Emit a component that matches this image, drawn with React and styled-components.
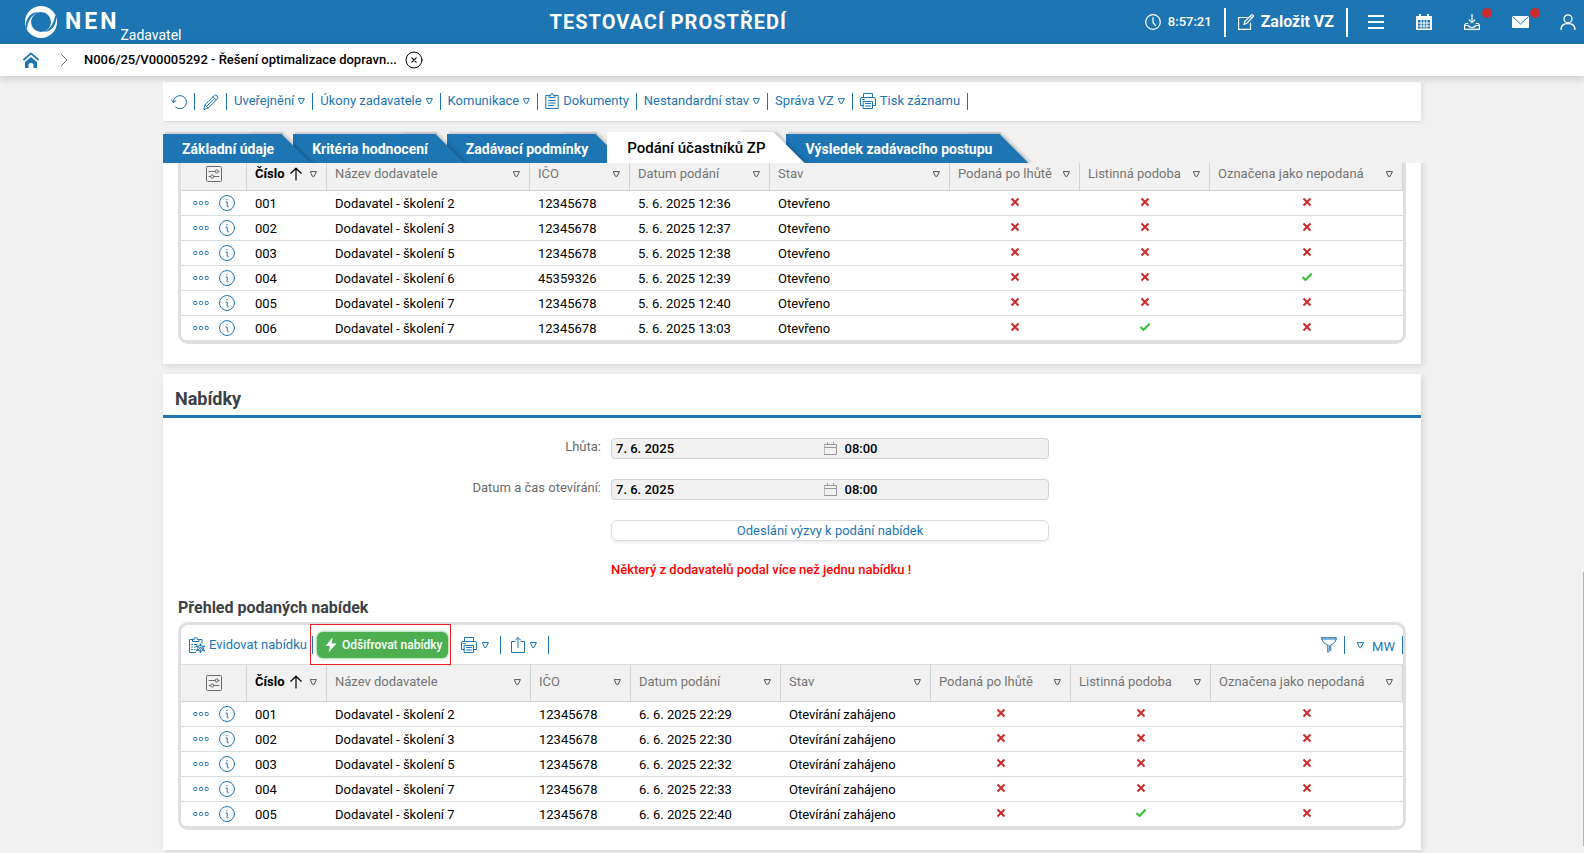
import React from 'react';
import styled, { createGlobalStyle, css } from 'styled-components';

const BLUE = '#1d75b4';
const LINE = '#dcdddf';
const GREY = '#f1f1f1';

const GlobalStyle = createGlobalStyle`
  *, *::before, *::after { box-sizing: border-box; }
  body {
    margin: 0;
    background: ${GREY};
    color: #000;
    font: 400 13px/16px Roboto, "Liberation Sans", sans-serif;
  }
  button, input { font: inherit; color: inherit; }
  svg { display: block; flex: none; }
`;

const Page = styled.div`
  position: relative;
  display: flex;
  flex-direction: column;
  min-height: 100vh;
`;

const plainButton = css`
  display: inline-flex;
  align-items: center;
  padding: 0;
  border: 0;
  background: none;
  cursor: pointer;
  white-space: nowrap;
`;

/* ---------- icons ---------- */

const Svg = ({ w = 16, h = w, box = `0 0 ${w} ${h}`, sw = 1, children, ...rest }) => (
  <svg width={w} height={h} viewBox={box} fill="none" stroke="currentColor" strokeWidth={sw}
    strokeLinecap="round" strokeLinejoin="round" aria-hidden="true" {...rest}>
    {children}
  </svg>
);

const Logo = () => (
  <Svg w={32} stroke="none">
    <circle cx="16" cy="16" r="16" fill="#fff" />
    <circle cx="16" cy="16" r="10" fill={BLUE} />
    <path d="M.6 22C.6 13 5 5.500 14 6.200C8 7.500 3.500 13 2 22z" fill={BLUE} />
    <path d="M31.400 10C31.400 19 27 26.500 18 25.800C24 24.500 28.500 19 30 10z" fill={BLUE} />
  </Svg>
);
const HomeIcon = () => (
  <Svg w={16} stroke="none">
    <path d="M8 5L14 10V16H10.500V12.500Q10.500 11 8 11T5.500 12.500V16H2V10z" fill={BLUE} />
    <path d="M1 7.500L8 1.300L15 7.500" stroke={BLUE} strokeWidth="1.800" fill="none" />
  </Svg>
);
const ChevronIcon = () => <Svg w={8} h={14} stroke="#666"><path d="M1.500 1.500L7 7L1.500 12.500" /></Svg>;
const CloseIcon = () => (
  <Svg w={18}><circle cx="9" cy="9" r="8" /><path d="M6.800 6.800L11.200 11.200M11.200 6.800L6.800 11.200" strokeWidth="1.200" /></Svg>
);
const ClockIcon = () => (
  <Svg w={16} sw={1.2}><circle cx="8" cy="8" r="7.300" /><path d="M8 3.500V8.500L10.500 11.500" /></Svg>
);
const EditIcon = () => (
  <Svg w={16} sw={1.2}>
    <path d="M9 3.500H.6V15.400H12.500V9" />
    <path d="M6 10.500L6.800 7.500L13.500.9Q14.200.4 15 1.100T15.200 2.500L8.800 9.300z" />
    <path d="M12.200 2.200L13.800 3.800" />
  </Svg>
);
const MenuIcon = () => <Svg w={16} sw={2} strokeLinecap="butt"><path d="M0 2H16M0 8H16M0 14H16" /></Svg>;
const CalendarIcon = () => (
  <Svg w={16} stroke="none">
    <path d="M0 2H3V0H5V2H11V0H13V2H16V16H0zM2 6V14.500H14V6z" fill="currentColor" fillRule="evenodd" />
    <path d="M5 6.500V14M8 6.500V14M11 6.500V14M2.500 9H13.500M2.500 12H13.500" stroke="currentColor" strokeWidth="1" />
  </Svg>
);
const DownloadIcon = () => (
  <Svg w={16} sw={1.2}>
    <path d="M8 .5V8.500M5.300 6L8 8.700L10.700 6" />
    <path d="M4 9.500H1.800L.6 11V15.400H15.400V11L14.200 9.500H12M.6 11.500H4.500Q5 13.500 8 13.500T11.500 11.500H15.400" />
  </Svg>
);
const MailIcon = () => (
  <Svg w={17} h={12}>
    <rect x="0" y="0" width="17" height="12" rx="1" fill="currentColor" stroke="none" />
    <path d="M.8.800L8.500 8L16.200.8" stroke={BLUE} />
  </Svg>
);
const UserIcon = () => (
  <Svg w={16} sw={1.3}><circle cx="8" cy="4.800" r="4" /><path d="M1 16C1 11.500 4 9.500 8 9.500S15 11.500 15 16" /></Svg>
);
const RefreshIcon = () => (
  <Svg w={16}><path d="M2.300 8.500A6.600 6.600 0 1 1 4.700 13.300" /><path d="M.5 6L2.300 8.500L5 6.500" /></Svg>
);
const PencilIcon = () => (
  <Svg w={16}>
    <path d="M.7 15.300L2 10.800L11.300 1.500Q12.500.3 14.100 1.900T14.500 4.700L5.200 14z" />
    <path d="M10 2.800L13.200 6M4 12L11.300 4.500M2 10.800L5.200 14" />
  </Svg>
);
const ClipboardIcon = () => (
  <Svg w={14} h={16}>
    <path d="M4 2.500H.8V15.500H13.200V2.500H10M4 2.500V4.500H10V2.500H8.500Q8.500.5 7 .5T5.500 2.500z" />
    <path d="M3.500 7.500H10.500M3.500 10H10.500M3.500 12.500H8.500" />
  </Svg>
);
const PrintIcon = () => (
  <Svg w={16}>
    <path d="M3.500 4.500V.5H12.500V4.500M3.500 12.500H.5V6Q.5 4.500 2 4.500H14Q15.500 4.500 15.500 6V12.500H12.500" />
    <path d="M3.500 8.500H12.500V15.500H3.500zM5.500 10.500H10.500M5.500 13H10.500M2.500 6.500H4.500" />
  </Svg>
);
const RegisterIcon = () => (
  <Svg w={16}>
    <path d="M6.500 15.500H.5V2.500H3.500M10 2.500H13V6M3.500 2.500V4.500H10V2.500H8.500Q8.500.5 6.700.5T5 2.500z" />
    <path d="M2.500 7.500H3.500M5.500 7.500H8M2.500 10H3.500M5.500 10H6.500M2.500 12.500H3.500M5.500 12.500H6" />
    <path d="M11.500 7V8.500M11.500 14V15.500M7.800 9.100L9 9.900M14 12.600L15.300 13.400M7.800 13.400L9 12.600M14 9.900L15.300 9.100" strokeWidth="1.500" />
    <circle cx="11.500" cy="11.300" r="2.900" /><circle cx="11.500" cy="11.300" r="1" />
  </Svg>
);
const BoltIcon = () => (
  <Svg w={12} h={16} stroke="none"><path d="M7.500.5L.5 9H5L3.500 15.500L11.500 6.500H6.800z" fill="#fff" /></Svg>
);
const ShareIcon = () => (
  <Svg w={14} h={16}><path d="M4 4.500H.5V15.500H13.500V4.500H10M7 10.500V1M4.500 3L7 .5L9.500 3" /></Svg>
);
const FilterIcon = () => (
  <Svg w={16}><path d="M.7 .7H15.300Q15.300 5.500 9.800 8V13L6.800 15.300V8Q.7 5.500 .7 .7zM.9 2H15.100M8.300 8.500V13" /></Svg>
);
const TriIcon = () => <Svg w={7} h={6}><path d="M.6.600H6.400L4.200 5.300H2.800z" /></Svg>;
const ColumnsIcon = () => (
  <Svg w={16} stroke="#6a6a6a">
    <rect x=".5" y=".5" width="15" height="15" rx="1" />
    <path d="M3 5.500H9M13 5.500H12.500M3 10.500H4.500M8.500 10.500H13" />
    <circle cx="10.800" cy="5.500" r="1.600" /><circle cx="6.300" cy="10.500" r="1.600" />
  </Svg>
);
const ArrowUpIcon = () => <Svg w={12} h={14} sw={1.2}><path d="M6 13V1.200M.8 6.200L6 1.200L11.200 6.200" /></Svg>;
const MoreIcon = () => (
  <Svg w={16} h={6}>
    <rect x=".8" y="1.500" width="3" height="3" rx=".8" /><rect x="6.500" y="1.500" width="3" height="3" rx=".8" />
    <rect x="12.200" y="1.500" width="3" height="3" rx=".8" />
  </Svg>
);
const InfoIcon = () => (
  <Svg w={16}>
    <circle cx="8" cy="8" r="7.500" />
    <path d="M7 7H8.200V11.500Q8.200 12 9.300 11.800M8 4.300V4.800" />
  </Svg>
);
const DateIcon = () => (
  <Svg w={13} stroke="#999"><path d="M.5 2.500H12.500V12.500H.5zM.5 5.500H12.500M3.500.5V2.500M9.500.5V2.500" /></Svg>
);
const CrossMark = () => (
  <Svg w={10} sw={2} stroke="#cf2a2a" strokeLinecap="butt"><path d="M1.500 1.500L8.500 8.500M8.500 1.500L1.500 8.500" /></Svg>
);
const CheckMark = () => (
  <Svg w={10} sw={2} stroke="#35c135" strokeLinecap="butt"><path d="M.5 5L3.500 8L9.700 1.500" /></Svg>
);

/* ---------- header ---------- */

const TopBar = styled.header`
  display: flex;
  align-items: center;
  height: 44px;
  padding: 0 8px 0 25px;
  background: ${BLUE};
  color: #fff;
`;
const Side = styled.div`
  flex: 1 1 0;
  display: flex;
  align-items: center;
  align-self: stretch;
`;
const Brand = styled.span`
  margin-left: 8px;
  font-size: 23px;
  font-weight: 700;
  letter-spacing: 3px;
`;
const Role = styled.span`
  align-self: flex-end;
  margin-left: 1px;
  padding-bottom: 1px;
  font-size: 14px;
`;
const Environment = styled.strong`
  margin-right: 358px;
  font-size: 20px;
  letter-spacing: 1px;
`;
const Actions = styled.div`
  display: flex;
  align-items: center;
`;
const Clock = styled.time`
  display: flex;
  align-items: center;
  gap: 7px;
  font-weight: 500;
`;
const Bar = styled.span`
  width: 2px;
  height: 29px;
  margin: 0 12px;
  background: #fff;
`;
const CreateButton = styled.button`
  ${plainButton}
  gap: 7px;
  font-size: 16px;
  font-weight: 700;
`;
const IconRow = styled.nav`
  display: flex;
  gap: 32px;
  margin-left: 8px;
`;
const IconButton = styled.button`
  ${plainButton}
  position: relative;
  width: 16px;
  height: 16px;
  ${p => p.$dot && css`
    &::after {
      content: '';
      position: absolute;
      left: 18px;
      top: -6px;
      width: 10px;
      height: 10px;
      border-radius: 50%;
      background: #cb2c2c;
    }
  `}
`;

const Breadcrumb = styled.nav`
  position: relative;
  z-index: 20;
  display: flex;
  align-items: center;
  height: 32px;
  padding-left: 23px;
  background: #fff;
  font-weight: 500;
  box-shadow: 0 2px 8px rgba(0, 0, 0, 0.18);
`;
const HomeLink = styled.a`
  margin-right: 21px;
`;
const Current = styled.span`
  margin: 0 8px 0 16px;
`;
const CloseButton = styled.button`
  ${plainButton}
`;

/* ---------- record area ---------- */

const Container = styled.div`
  width: 100%;
  max-width: 1258px;
  margin: 0 auto;
`;
const Toolbar = styled.div`
  display: flex;
  align-items: center;
  height: 40px;
  margin: 6px 0 10px;
  background: #fff;
  border-bottom: 1px solid ${LINE};
  box-shadow: 3px 0 4px rgba(0, 0, 0, 0.06);
  color: ${BLUE};
`;
const Tool = styled.button`
  ${plainButton}
  gap: 4px;
  height: 17px;
  padding: 0 7px 1px;
  border-right: 1px solid ${BLUE};
  ${p => p.$icon && css`padding: 1px 7px 0 8px;`}
`;

const Tabs = styled.div`
  display: flex;
  align-items: flex-end;
  height: 31px;
  clip-path: inset(-6px -40px 0 -6px);
`;
const Tab = styled.button`
  ${plainButton}
  position: relative;
  z-index: ${p => p.$z};
  height: ${p => (p.$active ? 31 : 29)}px;
  margin-right: 12px;
  padding: ${p => (p.$active ? '0 9px 0 20px' : '0 7px 0 19px')};
  background: ${p => (p.$active ? '#fff' : BLUE)};
  color: ${p => (p.$active ? '#000' : '#fff')};
  font-size: ${p => (p.$active ? 15 : 14)}px;
  font-weight: ${p => (p.$active ? 500 : 700)};
  box-shadow: ${p => (p.$active ? 'none' : '2px -2px 1px rgba(0, 0, 0, 0.12)')};
  &::after {
    content: '';
    position: absolute;
    z-index: -1;
    top: 0;
    right: -15px;
    width: 36px;
    height: 100%;
    background: inherit;
    transform: skewX(45deg);
    box-shadow: 3px 0 3px rgba(0, 0, 0, 0.2);
  }
`;

const Content = styled.main`
  overflow: hidden;
  flex: 1;
  padding-bottom: 3px;
`;
const Panel = styled.section`
  margin-top: ${p => (p.$scrolled ? -5 : 10)}px;
  padding-bottom: 20px;
  background: #fff;
  box-shadow: 2px 2px 6px rgba(0, 0, 0, 0.12);
`;
const PanelTitle = styled.h2`
  margin: 0 0 20px;
  padding: 13px 12px 12px;
  border-bottom: 3px solid ${BLUE};
  color: #3b4148;
  font-size: 18px;
  line-height: 24px;
  height: 44px;
  font-weight: 700;
`;
const FormRow = styled.div`
  display: grid;
  grid-template-columns: 438fr 438fr 362fr;
  column-gap: 10px;
  margin-bottom: 20px;
`;
const Label = styled.label`
  padding-top: 1px;
  text-align: right;
  color: #6b6b6b;
`;
const Field = styled.div`
  grid-column: 2;
  display: flex;
  align-items: center;
  height: 21px;
  border: 1px solid #d3d3d3;
  border-radius: 4px;
  background: ${GREY};
`;
const Input = styled.input`
  flex: 1 1 0;
  min-width: 0;
  height: 19px;
  padding: ${p => (p.$time ? '0 4px 0 8px' : '0 8px 0 4px')};
  border: 0;
  background: none;
  font-weight: 500;
  outline: none;
`;
const WideButton = styled.button`
  ${plainButton}
  grid-column: 2;
  justify-content: center;
  height: 21px;
  border: 1px solid ${LINE};
  border-radius: 6px;
  background: #fff;
  color: ${BLUE};
  box-shadow: 0 2px 3px rgba(0, 0, 0, 0.08);
`;
const Warning = styled.p`
  grid-column: 2;
  margin: 0;
  padding-top: 1px;
  color: #f00;
  font-weight: 500;
`;
const SubTitle = styled.h3`
  margin: 21px 15px 5px;
  color: #3b4148;
  font-size: 16px;
  line-height: 18px;
  font-weight: 700;
`;

/* ---------- table ---------- */

const Frame = styled.div`
  margin: 0 15px;
  border: 3px solid #dfdfe1;
  ${p => (p.$open ? css`border-top: 0; border-radius: 0 0 10px 10px;` : css`border-radius: 10px;`)}
`;
const TableTools = styled.div`
  display: flex;
  align-items: center;
  height: 40px;
  padding-left: 8px;
  border-bottom: 1px solid ${LINE};
  color: ${BLUE};
`;
const TableTool = styled.button`
  ${plainButton}
  gap: ${p => p.$gap || 5}px;
  height: 18px;
  padding: 0 ${p => p.$r}px 0 ${p => p.$l || 0}px;
  border-right: 1px solid ${BLUE};
`;
const User = styled.span`
  padding-top: 4px;
`;
const Highlight = styled.div`
  position: relative;
  z-index: 1;
  display: flex;
  align-items: center;
  height: 41px;
  margin: 0 2px 0 -3px;
  padding: 0 2px 0 6px;
  border: 1px solid #ed1c24;
`;
const DecryptButton = styled.button`
  ${plainButton}
  gap: 5px;
  height: 26px;
  padding: 0 5px 0 8px;
  border-radius: 6px;
  background: #4caf50;
  color: #fff;
  font-size: 12px;
  font-weight: 500;
  box-shadow: 0 0 3px #4caf50;
`;
const Push = styled.div`
  display: flex;
  margin-left: auto;
`;
const Table = styled.table`
  width: 100%;
  table-layout: fixed;
  border-collapse: separate;
  border-spacing: 0;
`;
const Th = styled.th`
  height: ${p => p.$h}px;
  padding: ${p => (p.$center ? '0' : `0 9px ${p.$h > 35 ? 2 : 0}px 8px`)};
  background: ${GREY};
  border-right: 1px solid #d2d3d5;
  border-bottom: 1px solid #d2d3d5;
  color: ${p => (p.$sorted ? '#000' : '#757575')};
  font-weight: ${p => (p.$sorted ? 700 : 400)};
  text-align: left;
`;
const HeadCell = styled.div`
  display: flex;
  align-items: center;
  justify-content: ${p => (p.$center ? 'center' : 'flex-start')};
  gap: 5px;
  white-space: nowrap;
`;
const SortButton = styled.button`
  ${plainButton}
  margin-left: auto;
  color: #555;
`;
const Td = styled.td`
  height: 25px;
  padding: ${p => (p.$icons ? '0 8px' : '2px 8px 0')};
  border-bottom: 1px solid ${LINE};
  white-space: nowrap;
`;
const RowActions = styled.div`
  display: flex;
  align-items: center;
  gap: 10px;
  padding-left: 4px;
  color: ${BLUE};
`;
const SmallButton = styled.button`
  ${plainButton}
`;
const Mark = styled.div`
  display: flex;
  justify-content: center;
  padding-bottom: 2px;
`;
const ScrollThumb = styled.div`
  position: absolute;
  right: 0;
  top: 572px;
  bottom: 7px;
  width: 1px;
  background: #b4b4b4;
`;

const HEADINGS = ['Číslo', 'Název dodavatele', 'IČO', 'Datum podání', 'Stav', 'Podaná po lhůtě', 'Listinná podoba', 'Označena jako nepodaná'];

function DataTable({ label, widths, headHeight, rows }) {
  return (
    <Table aria-label={label}>
      <colgroup>
        {widths.map((w, i) => <col key={i} width={w} />)}
        <col />
      </colgroup>
      <thead>
        <tr>
          <Th $h={headHeight} $center>
            <HeadCell $center><SmallButton aria-label="Nastavení sloupců"><ColumnsIcon /></SmallButton></HeadCell>
          </Th>
          {HEADINGS.map((h, i) => (
            <Th key={h} $h={headHeight} $sorted={i === 0} scope="col">
              <HeadCell>
                {h}
                {i === 0 && <ArrowUpIcon />}
                <SortButton aria-label={`Filtr ${h}`}><TriIcon /></SortButton>
              </HeadCell>
            </Th>
          ))}
        </tr>
      </thead>
      <tbody>
        {rows.map(row => (
          <tr key={row[0]}>
            <Td $icons>
              <RowActions>
                <SmallButton aria-label="Další akce"><MoreIcon /></SmallButton>
                <SmallButton aria-label="Detail"><InfoIcon /></SmallButton>
              </RowActions>
            </Td>
            {row.map((v, i) => (
              <Td key={i} $icons={typeof v === 'boolean'}>
                {typeof v === 'boolean' ? <Mark>{v ? <CheckMark /> : <CrossMark />}</Mark> : v}
              </Td>
            ))}
          </tr>
        ))}
      </tbody>
    </Table>
  );
}

const SUBMISSIONS = [
  ['001', 'Dodavatel - školení 2', '12345678', '5. 6. 2025 12:36', 'Otevřeno', false, false, false],
  ['002', 'Dodavatel - školení 3', '12345678', '5. 6. 2025 12:37', 'Otevřeno', false, false, false],
  ['003', 'Dodavatel - školení 5', '12345678', '5. 6. 2025 12:38', 'Otevřeno', false, false, false],
  ['004', 'Dodavatel - školení 6', '45359326', '5. 6. 2025 12:39', 'Otevřeno', false, false, true],
  ['005', 'Dodavatel - školení 7', '12345678', '5. 6. 2025 12:40', 'Otevřeno', false, false, false],
  ['006', 'Dodavatel - školení 7', '12345678', '5. 6. 2025 13:03', 'Otevřeno', false, true, false],
];
const OFFERS = [
  ['001', 'Dodavatel - školení 2', '12345678', '6. 6. 2025 22:29', 'Otevírání zahájeno', false, false, false],
  ['002', 'Dodavatel - školení 3', '12345678', '6. 6. 2025 22:30', 'Otevírání zahájeno', false, false, false],
  ['003', 'Dodavatel - školení 5', '12345678', '6. 6. 2025 22:32', 'Otevírání zahájeno', false, false, false],
  ['004', 'Dodavatel - školení 7', '12345678', '6. 6. 2025 22:33', 'Otevírání zahájeno', false, false, false],
  ['005', 'Dodavatel - školení 7', '12345678', '6. 6. 2025 22:40', 'Otevírání zahájeno', false, true, false],
];
const TABS = ['Základní údaje', 'Kritéria hodnocení', 'Zadávací podmínky', 'Podání účastníků ZP', 'Výsledek zadávacího postupu'];

const DateField = ({ id, label }) => (
  <FormRow>
    <Label htmlFor={id}>{label}</Label>
    <Field>
      <Input id={id} readOnly defaultValue="7. 6. 2025" />
      <DateIcon />
      <Input $time readOnly defaultValue="08:00" aria-label={`${label} čas`} />
    </Field>
  </FormRow>
);

export default function App() {
  return (
    <Page>
      <GlobalStyle />
      <TopBar>
        <Side>
          <Logo />
          <Brand>NEN</Brand>
          <Role>Zadavatel</Role>
        </Side>
        <Environment>TESTOVACÍ PROSTŘEDÍ</Environment>
        <Actions>
          <Clock><ClockIcon />8:57:21</Clock>
          <Bar />
          <CreateButton><EditIcon />Založit VZ</CreateButton>
          <Bar />
          <IconRow>
            <IconButton aria-label="Menu"><MenuIcon /></IconButton>
            <IconButton aria-label="Kalendář"><CalendarIcon /></IconButton>
            <IconButton aria-label="Stažení" $dot><DownloadIcon /></IconButton>
            <IconButton aria-label="Zprávy" $dot><MailIcon /></IconButton>
            <IconButton aria-label="Uživatel"><UserIcon /></IconButton>
          </IconRow>
        </Actions>
      </TopBar>
      <Breadcrumb>
        <HomeLink href="#" aria-label="Domů"><HomeIcon /></HomeLink>
        <ChevronIcon />
        <Current>N006/25/V00005292 - Řešení optimalizace dopravn...</Current>
        <CloseButton aria-label="Zavřít"><CloseIcon /></CloseButton>
      </Breadcrumb>

      <Container>
        <Toolbar>
          <Tool $icon aria-label="Obnovit"><RefreshIcon /></Tool>
          <Tool $icon aria-label="Upravit"><PencilIcon /></Tool>
          <Tool>Uveřejnění<TriIcon /></Tool>
          <Tool>Úkony zadavatele<TriIcon /></Tool>
          <Tool>Komunikace<TriIcon /></Tool>
          <Tool><ClipboardIcon />Dokumenty</Tool>
          <Tool>Nestandardní stav<TriIcon /></Tool>
          <Tool>Správa VZ<TriIcon /></Tool>
          <Tool><PrintIcon />Tisk záznamu</Tool>
        </Toolbar>
        <Tabs role="tablist">
          {TABS.map((t, i) => (
            <Tab key={t} role="tab" aria-selected={i === 3} $active={i === 3} $z={i === 3 ? 10 : 9 - i}>{t}</Tab>
          ))}
        </Tabs>
      </Container>

      <Content>
        <Container>
          <Panel $scrolled>
            <Frame $open>
              <DataTable label="Podání" widths={[66, 80, 203, 100, 140, 180, 130, 130]} headHeight={33} rows={SUBMISSIONS} />
            </Frame>
          </Panel>
          <Panel>
            <PanelTitle>Nabídky</PanelTitle>
            <DateField id="lhuta" label="Lhůta:" />
            <DateField id="otevirani" label="Datum a čas otevírání:" />
            <FormRow><WideButton>Odeslání výzvy k podání nabídek</WideButton></FormRow>
            <FormRow><Warning>Některý z dodavatelů podal více než jednu nabídku !</Warning></FormRow>
            <SubTitle>Přehled podaných nabídek</SubTitle>
            <Frame>
              <TableTools>
                <TableTool $r={5} $gap={4}><RegisterIcon />Evidovat nabídku</TableTool>
                <Highlight><DecryptButton><BoltIcon />Odšifrovat nabídky</DecryptButton></Highlight>
                <TableTool $l={8} $r={11} aria-label="Tisk"><PrintIcon /><TriIcon /></TableTool>
                <TableTool $l={10} $r={11} aria-label="Export"><ShareIcon /><TriIcon /></TableTool>
                <Push>
                  <TableTool $r={7} aria-label="Filtr"><FilterIcon /></TableTool>
                  <TableTool $l={12} $r={7} $gap={8}><TriIcon /><User>MW</User></TableTool>
                </Push>
              </TableTools>
              <DataTable label="Přehled podaných nabídek" widths={[66, 80, 204, 100, 150, 150, 140, 140]} headHeight={37} rows={OFFERS} />
            </Frame>
          </Panel>
        </Container>
      </Content>
      <ScrollThumb />
    </Page>
  );
}
